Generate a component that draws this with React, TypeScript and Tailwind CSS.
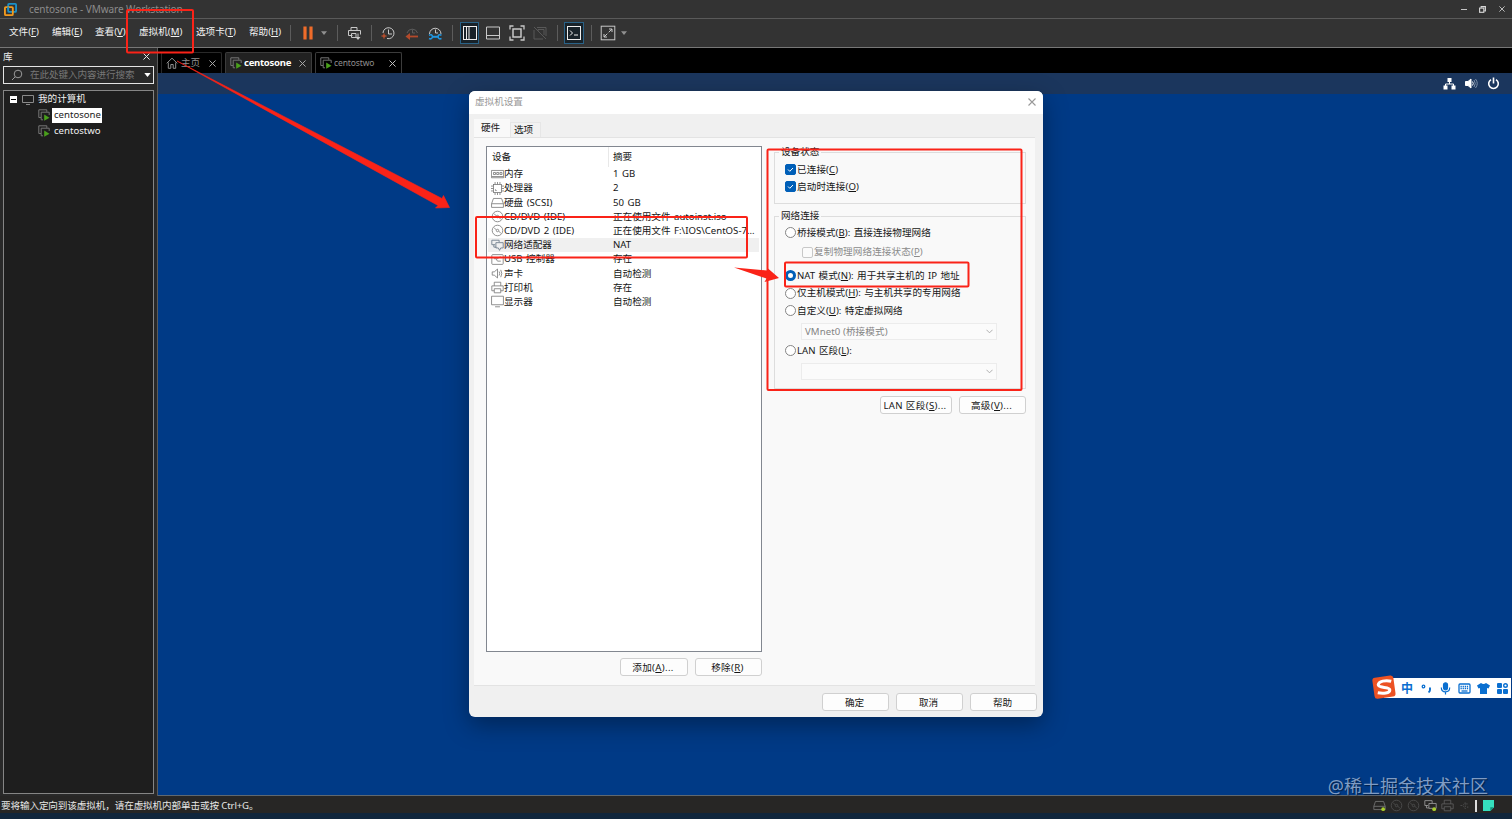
import React from 'react';

interface MenuItem {
  label: string;
  width: string;
}

interface Device {
  name: string;
  summary: string;
  icon: React.ReactNode;
  selected?: boolean;
}

const menuItems: MenuItem[] = [
  { label: '文件(F)', width: 'w-[43px]' },
  { label: '编辑(E)', width: 'w-[43px]' },
  { label: '查看(V)', width: 'w-[44px]' },
  { label: '虚拟机(M)', width: 'w-[57px]' },
  { label: '选项卡(T)', width: 'w-[53px]' },
  { label: '帮助(H)', width: 'w-[41px]' },
];

// Underlines the access key inside the brackets
function Mnemonic({ label }: { label: string }) {
  const match = label.match(/^(.*\()([A-Z])(\).*)$/);
  if (!match) return <>{label}</>;
  return (
    <>
      {match[1]}
      <span className="underline underline-offset-1">{match[2]}</span>
      {match[3]}
    </>
  );
}

function Icon({ children, className = 'w-4 h-4' }: { children: React.ReactNode; className?: string }) {
  return (
    <svg viewBox="0 0 16 16" className={`${className} shrink-0`} fill="none" stroke="currentColor" strokeWidth="1">
      {children}
    </svg>
  );
}

function Caret({ className = '' }: { className?: string }) {
  return (
    <svg viewBox="0 0 8 5" className={`w-1.5 h-1 ${className}`}>
      <path d="M0 0h8L4 5z" fill="currentColor" />
    </svg>
  );
}

function Cross({ className }: { className: string }) {
  return (
    <svg viewBox="0 0 8 8" className={`shrink-0 ${className}`} fill="none" stroke="currentColor" strokeWidth="1.1">
      <path d="M.5.5l7 7M7.5.5l-7 7" />
    </svg>
  );
}

function VmIcon() {
  return (
    <svg viewBox="0 0 12 12" className="w-3 h-3 shrink-0" fill="none">
      <path d="M3 8.5H.8V.8h8v2" stroke="#757575" />
      <path d="M5 10.800H3.200V3.200h8V6" stroke="#757575" />
      <path d="M6.200 5.500v6.300l5.300-3.100z" fill="#4aa01c" />
    </svg>
  );
}

function Separator({ className }: { className: string }) {
  return <div className={`w-px h-4 bg-[#5c5c5c] shrink-0 ${className}`} />;
}

function TitleBar() {
  return (
    <div className="h-[19px] shrink-0 flex items-center bg-[#333333] border-b border-[#5a5a5a] pl-1 pr-1">
      <svg viewBox="0 0 14 14" className="w-[13px] h-[13px] shrink-0" fill="none" strokeWidth="2">
        <rect x="4.500" y="1" width="8.500" height="8.500" rx="1" stroke="#1b91c9" />
        <rect x="1" y="4.500" width="8.500" height="8.500" rx="1" stroke="#f29a1f" />
        <path d="M4.500 7V4" stroke="#1b91c9" />
      </svg>
      <span className="ml-3 text-[10px] leading-none tracking-[-0.05px] text-[#8c8c8c] flex-1">centosone - VMware Workstation</span>
      <div className="flex items-center text-[#d6d6d6]">
        <div className="w-[6px] h-px bg-[#c4c4c4]" />
        <svg viewBox="0 0 8 8" className="w-[7px] h-[7px] ml-[12px]" fill="none" stroke="currentColor" strokeWidth="1.300">
          <path d="M2.500 2V.7h4.800v4.800H6" />
          <rect x=".7" y="2.400" width="4.800" height="4.800" />
        </svg>
        <Cross className="w-[6px] h-[6px] ml-[13px] mr-[3px]" />
      </div>
    </div>
  );
}

function Toolbar() {
  return (
    <div className="flex items-center text-[#c8c8c8] -mt-px">
      <Separator className="" />
      <Icon className="w-4 h-4 ml-[9px]">
        <path d="M5 1.500v13M11 1.500v13" stroke="#ef6c2a" strokeWidth="3.200" />
      </Icon>
      <div className="w-4 flex justify-center text-[#909090]"><Caret /></div>
      <Separator className="ml-[5px]" />
      <Icon className="w-4 h-4 ml-[8px]">
        <path d="M5 6V2.500h6V6M6.500 10.500h-4v-5h12v4M5.500 8.500H10v4H5.500zM12 8.500v5" />
        <path d="M9.500 12h5L12 15z" fill="currentColor" stroke="none" />
      </Icon>
      <Separator className="ml-[9px]" />
      <Icon className="w-4 h-4 ml-[8px]">
        <path d="M3 8a5.500 5.500 0 1 1 4 5.500M8.500 4.500V9H12" />
        <path d="M1.500 11h5M4 8.500v5" stroke="#e2572b" />
      </Icon>
      <Icon className="w-4 h-4 ml-2">
        <path d="M3 8a5.500 5.500 0 0 1 10.500 0M8.500 4.500V8H11" stroke="#5c5c5c" />
        <path d="M4 11.500h10" stroke="#b34a2b" strokeWidth="1.800" />
        <path d="M6 8v7l-4.500-3.500z" fill="#b34a2b" stroke="none" />
      </Icon>
      <Icon className="w-4 h-4 ml-[7px]">
        <path d="M2.500 9a5.500 5.500 0 1 1 11.500 0M8.500 4.500V8H11" />
        <path d="M5 11.800h6.500" stroke="#2196df" strokeWidth="2" />
        <path d="M2 10.200q3-1.500 3.500 1.500-.5 3-3.500 1.800M14.500 10.200q-3-1.500-3.500 1.500.5 3 3.500 1.800" stroke="#2196df" strokeWidth="1.600" />
      </Icon>
      <Separator className="ml-[9px]" />
      <div className="ml-[7px] w-[19px] h-[22px] flex items-center justify-center bg-[#182229] border border-[#2a6287] text-[#eeeeee]">
        <Icon>
          <rect x="1.500" y="1.500" width="13" height="13" />
          <path d="M4.500 2v12M7 2v12" />
        </Icon>
      </div>
      <Icon className="w-4 h-4 ml-[6px]">
        <path d="M1.500 2h13v12h-13zM1.500 10.500h13" />
      </Icon>
      <Icon className="w-4 h-4 ml-2">
        <path d="M1 4.500V1h3.500M11.500 1H15v3.500M15 11.500V15h-3.500M4.500 15H1v-3.500" strokeWidth="1.300" />
        <rect x="4" y="4" width="8" height="8" strokeWidth="1.500" />
      </Icon>
      <Icon className="w-4 h-4 ml-[7px] text-[#585858]">
        <path d="M2 5v9h9M5 2.500h9V11M6 6V4.500h6V10M2 2l12 12" />
      </Icon>
      <Separator className="ml-[9px]" />
      <div className="ml-[6px] w-5 h-[22px] flex items-center justify-center bg-[#182229] border border-[#2a6287] text-[#eeeeee]">
        <Icon>
          <rect x="1.500" y="1.500" width="13" height="13" />
          <path d="M4 5.500L6.500 8 4 10.500M8 10h4" />
        </Icon>
      </div>
      <Separator className="ml-[7px]" />
      <Icon className="w-4 h-4 ml-2">
        <rect x="1.200" y="1.200" width="13.600" height="13.600" />
        <path d="M4 9v3h3M9 4h3v3M4 12l3.300-3.300M12 4L8.700 7.300" />
      </Icon>
      <div className="w-4 flex justify-center text-[#909090]"><Caret /></div>
    </div>
  );
}

function Sidebar() {
  return (
    <aside className="w-[158px] shrink-0 flex flex-col bg-[#292929] border-r border-[#5a5a5a] pl-[3px] pr-[3px] pb-[2px] text-[9.6px] leading-none">
      <div className="h-[18px] flex items-center justify-between text-[#ededed] pr-1">
        <span>库</span>
        <Cross className="w-[7px] h-[7px] -mt-[2px]" />
      </div>
      <div className="h-[18px] flex items-center border-[1.500px] border-[#e4e4e4] bg-[#292929] text-[#777777] pl-[7px] pr-[2px]">
        <svg viewBox="0 0 12 12" className="w-3 h-3 shrink-0" fill="none" stroke="#9a9a9a">
          <circle cx="7" cy="5" r="3.800" />
          <path d="M4.200 7.800L1 11" />
        </svg>
        <span className="ml-[7px] flex-1 whitespace-nowrap tracking-[-0.1px]">在此处键入内容进行搜索</span>
        <Caret className="text-white !w-[7px]" />
      </div>
      <div className="flex-1 mt-[6px] border border-[#858585] bg-[#1e1e1e] text-[#f0f0f0]">
        <div className="h-4 flex items-center pl-[6px]">
          <div className="w-[7px] h-[7px] bg-white flex items-center justify-center">
            <div className="w-[5px] h-px bg-black" />
          </div>
          <svg viewBox="0 0 12 11" className="w-3 h-[11px] ml-[5px]" fill="none" stroke="#8a8a8a">
            <path d="M.5 1.500h11v7H.5zM4 10.500h4" />
          </svg>
          <span className="ml-[4px]">我的计算机</span>
        </div>
        <div className="h-4 flex items-center pl-[34px]">
          <VmIcon />
          <span className="ml-[2px] h-[15px] pl-[2px] pr-[1px] flex items-center bg-white text-[#222222]">centosone</span>
        </div>
        <div className="h-4 flex items-center pl-[34px]">
          <VmIcon />
          <span className="ml-[4px]">centostwo</span>
        </div>
      </div>
    </aside>
  );
}

function TabStrip() {
  return (
    <div className="h-[25px] shrink-0 bg-black flex items-end text-[9.6px] leading-none text-[#8f8f8f] pl-[3px]">
      <div className="w-[61px] h-[21px] flex items-center border border-b-0 border-[#292929] rounded-t-xs pl-[4px]">
        <svg viewBox="0 0 12 12" className="w-3 h-3 shrink-0" fill="none" stroke="#8f8f8f">
          <path d="M.7 6.300L6 1.200l5.300 5.100M2.300 5.500v5.800h2.500V7.500h2.400v3.800h2.500V5.500" />
        </svg>
        <span className="ml-[3px]">主页</span>
        <Cross className="w-[7px] h-[7px] ml-[9px] text-[#aaaaaa]" />
      </div>
      <div className="ml-[3px] w-[87px] h-[21px] flex items-center border border-b-0 border-[#3c3c3c] rounded-t-xs bg-[#212121] pl-[4px]">
        <VmIcon />
        <span className="ml-[2px] w-[49px] whitespace-nowrap font-bold text-[9.500px] tracking-[-0.25px] text-white">centosone</span>
        <Cross className="w-[7px] h-[7px] ml-[6px] text-[#aaaaaa]" />
      </div>
      <div className="ml-[3px] w-[87px] h-[21px] flex items-center border border-b-0 border-[#3c3c3c] rounded-t-xs pl-[4px]">
        <VmIcon />
        <span className="ml-[2px] w-[49px] whitespace-nowrap text-[8.500px] tracking-[-0.1px]">centostwo</span>
        <Cross className="w-[7px] h-[7px] ml-[6px] text-[#c4c4c4]" />
      </div>
    </div>
  );
}

function GuestBar() {
  return (
    <div className="h-[21px] shrink-0 bg-[#1b365d] flex items-center justify-end gap-[9px] pr-[12px] text-white">
      <svg viewBox="0 0 13 13" className="w-[13px] h-[13px]" fill="currentColor">
        <path d="M4.500 1h4v4h-4zM.5 8.500h4v4h-4zM8.500 8.500h4v4h-4z" />
        <path d="M6.500 5v2M2.500 9V7h8v2" fill="none" stroke="currentColor" />
      </svg>
      <svg viewBox="0 0 13 13" className="w-[13px] h-[13px]" fill="none" stroke="currentColor">
        <path d="M.5 4.500h2.500l3-2.500v9L3 8.500H.5z" fill="currentColor" />
        <path d="M7.500 4.500q1.500 2 0 4" />
        <path d="M9 3q2.500 3.500 0 7M10.500 2q3.500 4.500 0 9" stroke="#7f91a9" />
      </svg>
      <svg viewBox="0 0 13 13" className="w-[13px] h-[13px]" fill="none" stroke="currentColor" strokeWidth="1.600">
        <path d="M4 2.600a4.800 4.800 0 1 0 5 0M6.500.5v6" />
      </svg>
    </div>
  );
}

const discIcon = (
  <Icon className="w-[13px] h-[13px]">
    <circle cx="8" cy="8" r="6.500" />
    <circle cx="8" cy="8" r="1.500" />
    <path d="M4 5l2.500 2M9.500 9l2.500 2" />
  </Icon>
);

const devices: Device[] = [
  {
    name: '内存',
    summary: '1 GB',
    icon: <Icon className="w-[13px] h-[13px]"><path d="M.5 3h15v9H.5zM3 5.500h2.500V8H3zM7 5.500h2.500V8H7zM11 5.500h2.500V8H11zM1 10.500h14" /></Icon>,
  },
  {
    name: '处理器',
    summary: '2',
    icon: <Icon className="w-[13px] h-[13px]"><rect x="3" y="3" width="10" height="10" /><path d="M5 0v3M8 0v3M11 0v3M5 13v3M8 13v3M11 13v3M0 5h3M0 8h3M0 11h3M13 5h3M13 8h3M13 11h3M5.500 9v1.500H7" /></Icon>,
  },
  {
    name: '硬盘 (SCSI)',
    summary: '50 GB',
    icon: <Icon className="w-[13px] h-[13px]"><path d="M.7 9.500L3 3h10l2.300 6.500V14H.7zM.7 9.500h14.600" /></Icon>,
  },
  { name: 'CD/DVD (IDE)', summary: '正在使用文件 autoinst.iso', icon: discIcon },
  { name: 'CD/DVD 2 (IDE)', summary: '正在使用文件 F:\\IOS\\CentOS-7...', icon: discIcon },
  {
    name: '网络适配器',
    summary: 'NAT',
    selected: true,
    icon: <Icon className="w-[13px] h-[13px]"><path d="M1 1.500h9V4M1 1.500V7h4M3.500 7v3h3M6 4.500h9v6.500h-3L10.500 14 9 11H6z" stroke="#667584" /></Icon>,
  },
  {
    name: 'USB 控制器',
    summary: '存在',
    icon: <Icon className="w-[13px] h-[13px]"><rect x="1" y="2" width="14" height="12" rx="1" /><path d="M3.500 7h5l2-2h2M6 7l2 3h4" /></Icon>,
  },
  {
    name: '声卡',
    summary: '自动检测',
    icon: <Icon className="w-[13px] h-[13px]"><path d="M1.500 6H4l4-3.500v11L4 10H1.500zM10 5.500q1.500 2.500 0 5M12 3.500q2.500 4.500 0 9" /></Icon>,
  },
  {
    name: '打印机',
    summary: '存在',
    icon: <Icon className="w-[13px] h-[13px]"><path d="M4 6V1.500h8V6M4 12H1V6h14v6h-3M4 9.500h8v5H4z" /></Icon>,
  },
  {
    name: '显示器',
    summary: '自动检测',
    icon: <Icon className="w-[13px] h-[13px]"><path d="M.7 1.500h14.600v10.500H.7zM5 14.500h6" /></Icon>,
  },
];

function DialogButton({ label, width }: { label: string; width: string }) {
  return (
    <button className={`h-[18px] ${width} shrink-0 bg-[#fdfdfd] border border-[#d0d0d0] rounded-[3px] flex items-center justify-center leading-none whitespace-nowrap pt-[2px] pr-[2px]`}>
      <span className={label.includes('(') ? 'tracking-[0.35px]' : ''}><Mnemonic label={label} /></span>
    </button>
  );
}

function Checkbox({ label, checked, disabled }: { label: string; checked?: boolean; disabled?: boolean }) {
  return (
    <label className={`flex items-center h-[17px] leading-none whitespace-nowrap ${disabled ? 'text-[#8b8b8b]' : ''}`}>
      <span className={`w-[11px] h-[11px] shrink-0 rounded-[2px] border mr-[1px] ${checked ? 'bg-[#005fb8] border-[#005fb8]' : 'border-[#c8c8c8] bg-[#fbfbfb]'}`}>
        {checked && (
          <svg viewBox="0 0 9 9" className="w-full h-full" fill="none" stroke="white">
            <path d="M2 4.500l1.800 1.800L7 3" />
          </svg>
        )}
      </span>
      <span className="tracking-[0.1px]"><Mnemonic label={label} /></span>
    </label>
  );
}

function Radio({ label, checked }: { label: string; checked?: boolean }) {
  return (
    <label className="flex items-center h-[17.5px] leading-none whitespace-nowrap">
      <span className={`w-[11px] h-[11px] shrink-0 rounded-full mr-[1px] bg-white ${checked ? 'border-[3px] border-[#005fb8]' : 'border border-[#858585]'}`} />
      <span className="tracking-[0.05px] [word-spacing:0.8px]"><Mnemonic label={label} /></span>
    </label>
  );
}

function ComboBox({ value }: { value: string }) {
  return (
    <div className="ml-[16px] w-[196px] h-[17px] border border-[#ececec] bg-[#fbfbfb] flex items-center justify-between pl-[3px] pr-[3px] leading-none text-[#838383]">
      <span className="tracking-[0.1px]">{value}</span>
      <svg viewBox="0 0 8 5" className="w-[7px] h-[5px]" fill="none" stroke="#a5a5a5">
        <path d="M.5.5L4 4 7.500.5" />
      </svg>
    </div>
  );
}

function SettingsDialog() {
  return (
    <div className="absolute left-[469px] top-[91px] w-[574px] h-[626px] flex flex-col bg-[#f0f0f0] rounded-[6px] overflow-hidden shadow-[0_8px_24px_rgba(0,0,0,0.35)] text-[9.6px] leading-none text-[#161616]">
      <div className="h-[23px] shrink-0 bg-white flex items-center justify-between pl-[6px] pr-[7px] text-[#999999]">
        <span className="-mt-[2px]">虚拟机设置</span>
        <Cross className="w-[8px] h-[8px] -mt-[2px]" />
      </div>
      <div className="h-[23px] shrink-0 flex items-end pl-[5px]">
        <div className="w-[36px] h-[18px] bg-[#f9f9f9] flex items-center pl-[7px]">硬件</div>
        <div className="w-[31px] h-[15px] border border-b-0 border-[#e6e6e6] bg-[#f2f2f2] flex items-center pl-[3px]">选项</div>
      </div>

      <div className="flex-1 ml-[5px] mr-[8px] flex bg-[#f9f9f9] border-t border-b border-[#e3e3e3]">
        {/* Device list */}
        <div className="ml-[12px] w-[276px] pt-[8px] flex flex-col">
          <div className="h-[506px] border border-[#828790] bg-white">
            <div className="h-[20px] flex items-center">
              <div className="w-[122px] h-full pl-[5px] flex items-center border-r border-[#e8e8e8]">设备</div>
              <div className="pl-[4px]">摘要</div>
            </div>
            {devices.map((device) => (
              <div
                key={device.name}
                className={`h-[14.2px] mr-[2px] ml-[1px] pl-[3px] flex items-center whitespace-nowrap [word-spacing:1px] ${device.selected ? 'bg-[#f0f0f0]' : ''}`}
              >
                <div className="w-[122px] flex items-center shrink-0">
                  <span className="w-[13px] shrink-0 text-[#777777]">{device.icon}</span>
                  <span>{device.name}</span>
                </div>
                <span>{device.summary}</span>
              </div>
            ))}
          </div>
          <div className="mt-[6px] flex justify-end gap-[7px]">
            <DialogButton label="添加(A)..." width="w-[68px]" />
            <DialogButton label="移除(R)" width="w-[67px]" />
          </div>
        </div>

        {/* Network adapter options */}
        <div className="ml-[12px] w-[252px] pt-[8px] flex flex-col">
          <fieldset className="h-[58px] border border-[#dddddd] pl-[10px]">
            <legend className="-ml-[6px] px-[2px] h-[12px] flex items-center">设备状态</legend>
            <div className="pt-[3px]">
              <Checkbox label="已连接(C)" checked />
              <Checkbox label="启动时连接(O)" checked />
            </div>
          </fieldset>
          <fieldset className="mt-[6px] h-[179px] border border-[#dddddd] pl-[10px]">
            <legend className="-ml-[6px] px-[2px] h-[12px] flex items-center">网络连接</legend>
            <div className="pt-[2px]">
              <Radio label="桥接模式(B): 直接连接物理网络" />
              <div className="pl-[17px] pt-[2px] pb-[6.500px]">
                <Checkbox label="复制物理网络连接状态(P)" disabled />
              </div>
              <Radio label="NAT 模式(N): 用于共享主机的 IP 地址" checked />
              <Radio label="仅主机模式(H): 与主机共享的专用网络" />
              <Radio label="自定义(U): 特定虚拟网络" />
              <div className="pt-[3.500px] pb-[2px]">
                <ComboBox value="VMnet0 (桥接模式)" />
              </div>
              <Radio label="LAN 区段(L):" />
              <div className="pt-[3px]">
                <ComboBox value="" />
              </div>
            </div>
          </fieldset>
          <div className="mt-[7px] flex justify-end gap-[7px]">
            <DialogButton label="LAN 区段(S)..." width="w-[72px]" />
            <DialogButton label="高级(V)..." width="w-[67px]" />
          </div>
        </div>
      </div>

      <div className="h-[31px] shrink-0 flex items-center justify-end gap-[7px] pr-[6px]">
        <DialogButton label="确定" width="w-[67px]" />
        <DialogButton label="取消" width="w-[67px]" />
        <DialogButton label="帮助" width="w-[67px]" />
      </div>
    </div>
  );
}

// Sogou input method floating bar
function ImeBar() {
  return (
    <div className="absolute left-[1372px] top-[674px] w-[139px] h-[27px] flex items-center text-[#0a6fd0]">
      <div className="absolute left-3 right-0 top-[4px] h-[20px] bg-white" />
      <svg viewBox="0 0 26 26" className="relative w-[25px] h-[25px] shrink-0 overflow-visible">
        <rect x="1.500" y="1.500" width="22" height="22" rx="3" fill="#ec5223" transform="rotate(-8 13 13)" />
        <path d="M20 6.500C14 5 7 6.500 6.500 10c-.4 4 12 2 12 5.500 0 3.500-7 4-12.500 3" fill="none" stroke="white" strokeWidth="3.200" />
      </svg>
      <div className="relative flex items-center pl-[4px] pt-[2px] gap-[6px]">
        <span className="w-[13px] text-[12px] leading-none font-bold">中</span>
        <svg viewBox="0 0 13 13" className="w-[13px] h-[13px]" fill="none" stroke="currentColor" strokeWidth="1.300">
          <circle cx="3.500" cy="4.500" r="1.300" />
          <path d="M9 6.500h1v1.500q0 1.500-1.500 2.300" strokeWidth="1.900" />
        </svg>
        <svg viewBox="0 0 13 13" className="w-[13px] h-[13px]" fill="none" stroke="currentColor" strokeWidth="1.200">
          <rect x="4.500" y=".8" width="4" height="7" rx="2" fill="currentColor" />
          <path d="M2.300 5.500q0 4.300 4.200 4.300t4.200-4.300M6.500 10v2.500" />
        </svg>
        <svg viewBox="0 0 13 13" className="w-[13px] h-[13px]" fill="none" stroke="currentColor" strokeWidth="1.300">
          <rect x="1" y="2" width="11" height="9" rx="1" />
          <path d="M2.500 4.500h8M2.500 6.500h8" strokeDasharray="1.300 .8" />
          <path d="M3.500 9h6" />
        </svg>
        <svg viewBox="0 0 13 13" className="w-[13px] h-[13px]" fill="currentColor">
          <path d="M4 1q2.500 2 5 0l4 2.500-1.500 3L10 6v6H3V6l-1.500.5L0 3.500z" />
        </svg>
        <svg viewBox="0 0 13 13" className="w-[13px] h-[13px]" fill="currentColor">
          <rect x="1" y="1" width="5" height="5" rx="1" />
          <rect x="7.700" y="1.700" width="3.600" height="3.600" rx="1.800" fill="none" stroke="currentColor" strokeWidth="1.400" />
          <rect x="1" y="7" width="5" height="5" rx="1" />
          <rect x="7" y="7" width="5" height="5" rx="1" />
        </svg>
      </div>
    </div>
  );
}

function StatusBar() {
  return (
    <div className="h-[17px] shrink-0 flex items-center justify-between bg-[#272625] pl-px pr-[18px] pt-[2px] text-[9.6px] leading-none text-[#e6e6e6]">
      <span className="tracking-[-0.12px]">要将输入定向到该虚拟机，请在虚拟机内部单击或按 Ctrl+G。</span>
      <div className="flex items-center text-[#777777] gap-[4px]">
        <Icon className="w-[13px] h-[13px]">
          <path d="M1 9l2-6h10l2 6v4H1zM1 9h14" />
          <circle cx="12.500" cy="12.500" r="2.300" fill="#a8ce2c" stroke="none" />
        </Icon>
        <span className="text-[#505050]">{discIcon}</span>
        <span className="text-[#505050]">{discIcon}</span>
        <Icon className="w-[13px] h-[13px]">
          <path d="M1 2h9v3M1 2v6h4M3 8v3h3M6 5.500h9v6H6z" stroke="#a0a0a0" />
          <circle cx="12.500" cy="12.500" r="2.300" fill="#a8ce2c" stroke="none" />
        </Icon>
        <Icon className="w-[13px] h-[13px] text-[#606060]"><path d="M4 6V1.500h8V6M4 12H1V6h14v6h-3M4 9.500h8v5H4z" /></Icon>
        <Icon className="w-[13px] h-[13px] text-[#505050]"><path d="M3 8h3l3-4v8L6 8M11 5v2M12 9v2" strokeDasharray="2 1" /></Icon>
        <div className="w-[2px] h-3 bg-[#dcdcdc]" />
        <svg viewBox="0 0 12 12" className="w-[11px] h-[11px] ml-[2px]">
          <path d="M0 0h12v8l-4 4H0z" fill="#35dfbd" />
          <path d="M12 8H8v4z" fill="#178e79" />
        </svg>
      </div>
    </div>
  );
}

function Annotations() {
  return (
    <svg viewBox="0 0 1512 819" className="absolute inset-0 w-full h-full pointer-events-none" fill="none" stroke="#fa2318" strokeWidth="2">
      <rect x="127" y="10" width="66" height="42.500" rx="1" />
      <rect x="476" y="217" width="271" height="40.500" rx="1" />
      <rect x="767.500" y="149.500" width="254" height="240.500" rx="1" />
      <rect x="785" y="262.500" width="183.500" height="24" rx="1" />
      <path d="M177 61L442 198.500 443.500 195.500 449.500 207.500 435.500 208 438 205.500z" fill="#fa2318" stroke="#fa2318" strokeWidth=".6" />
      <path d="M734 267.500L767 270.500 768 268.500 779 278 764.500 282 766.500 278.500z" fill="#fa2318" stroke="none" />
    </svg>
  );
}

export default function App() {
  return (
    <div className="relative w-[1512px] h-[819px] overflow-hidden flex flex-col bg-[#333333] font-['Noto_Sans','Noto_Sans_CJK_SC',sans-serif]">
      <TitleBar />
      <div className="h-[29px] shrink-0 flex items-center bg-[#333333] border-b border-[#777777] pl-[9px] text-[9.6px] leading-none text-[#f2f2f2]">
        {menuItems.map((item) => (
          <span key={item.label} className={`${item.width} shrink-0 whitespace-nowrap -mt-[2px]`}>
            <Mnemonic label={item.label} />
          </span>
        ))}
        <Toolbar />
      </div>

      <div className="flex-1 min-h-0 flex">
        <Sidebar />
        <main className="flex-1 flex flex-col bg-[#003a86]">
          <TabStrip />
          <GuestBar />
          <div className="flex-1 flex items-end justify-end pr-[24px] border-b border-[#5f6870]">
            <span className="text-[18px] leading-none text-[#7f9cc4] [text-shadow:1px_1px_1px_rgba(0,0,0,0.5)]">@稀土掘金技术社区</span>
          </div>
        </main>
      </div>
      <StatusBar />
      <div className="h-[6px] shrink-0 bg-[#11263c]" />

      <SettingsDialog />
      <ImeBar />
      <Annotations />
    </div>
  );
}
